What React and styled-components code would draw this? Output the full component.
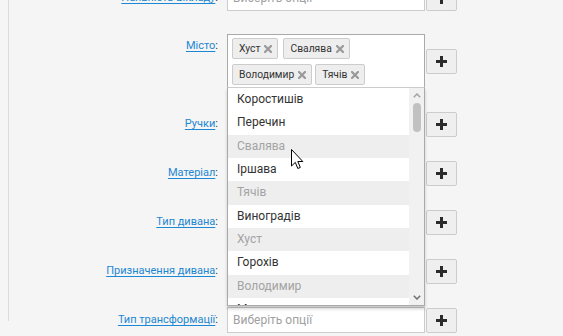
import React from "react";
import styled, { createGlobalStyle } from "styled-components";

const GlobalStyle = createGlobalStyle`
  html, body { margin: 0; padding: 0; }
  body {
    background: #f5f5f5;
    font-family: Roboto, "Noto Sans", Arial, sans-serif;
    overflow: hidden;
  }
`;

const Page = styled.div`
  position: relative;
  width: 563px;
  height: 336px;
  overflow: hidden;
  padding-left: 8px;
  box-sizing: border-box;
`;

const Panel = styled.div`
  height: 100%;
  border-left: 1px solid #dcdcdc;
`;

const Form = styled.div`
  display: flex;
  flex-direction: column;
  gap: 23px;
  margin-top: -15px;
`;

const Row = styled.div`
  display: flex;
  align-items: ${(p) => (p.$top ? "flex-start" : "center")};
`;

const Label = styled.div`
  width: 209px;
  margin-right: 9px;
  text-align: right;
  font-size: 11px;
  line-height: 14px;
  color: #333;
  padding-top: ${(p) => (p.$top ? "5px" : "0")};
  white-space: nowrap;
`;

const LabelLink = styled.a`
  color: #1c87d3;
  text-decoration: underline;
  text-underline-offset: 2px;
  cursor: pointer;
`;

const Field = styled.div`
  position: relative;
  width: 198px;
`;

const Input = styled.div`
  box-sizing: border-box;
  height: 26px;
  border: 1px solid #ccc;
  background: #fff;
  padding: 0 5px;
  font-size: 12px;
  line-height: 24px;
  color: #a0a0a0;
`;

const MultiBox = styled.div`
  box-sizing: border-box;
  border: 1px solid #aaa;
  background: #fff;
  padding: 3px 0 2px 4px;
  display: flex;
  flex-wrap: wrap;
  row-gap: 5px;
`;

const Tag = styled.span`
  box-sizing: border-box;
  height: 21px;
  display: inline-flex;
  align-items: center;
  gap: 4px;
  padding: 0 5px 0 6px;
  margin-right: ${(p) => p.$mr || 5}px;
  background: #eee;
  border: 1px solid #ccc;
  border-radius: 2px;
  font-size: 10.3px;
  color: #333;
`;

const TagX = styled.svg`
  width: 8px;
  height: 8px;
  display: block;
`;

const PlusButton = styled.button`
  box-sizing: border-box;
  width: 31px;
  height: 25px;
  margin-left: 1px;
  margin-top: ${(p) => (p.$top ? "15px" : "0")};
  background: #efefef;
  border: 1px solid #ccc;
  border-radius: 2px;
  padding: 0;
  display: flex;
  align-items: center;
  justify-content: center;
`;

const Dropdown = styled.div`
  position: absolute;
  left: 0;
  right: 0;
  top: calc(100% - 1px);
  height: 219px;
  box-sizing: border-box;
  border: 1px solid #aaa;
  border-top-color: #ccc;
  background: #fff;
  box-shadow: 0 3px 3px rgba(0, 0, 0, 0.18);
  display: flex;
  z-index: 5;
`;

const List = styled.div`
  flex: 1;
  overflow: hidden;
`;

const Option = styled.div`
  height: 23.33px;
  box-sizing: border-box;
  padding-left: 9px;
  font-size: 12px;
  line-height: 23.33px;
  color: ${(p) => (p.$taken ? "#a3a3a3" : "#333")};
  background: ${(p) => (p.$taken ? "#eeeeee" : "#fff")};
  white-space: nowrap;
`;

const Scrollbar = styled.div`
  width: 15px;
  background: #f1f1f1;
  display: flex;
  flex-direction: column;
`;

const ScrollArrow = styled.div`
  height: 15px;
  display: flex;
  align-items: center;
  justify-content: center;
`;

const Track = styled.div`
  flex: 1;
  display: flex;
  justify-content: center;
`;

const Thumb = styled.div`
  width: 8px;
  height: 29px;
  border-radius: 4px;
  background: #c1c1c1;
`;

const Cursor = styled.svg`
  position: absolute;
  left: 291px;
  top: 149px;
  z-index: 10;
`;

const Plus = () => (
  <svg width="11" height="11" viewBox="0 0 11 11">
    <rect x="4" y="0" width="3" height="11" fill="#2b2b2b" />
    <rect x="0" y="4" width="11" height="3" fill="#2b2b2b" />
  </svg>
);

const X = () => (
  <TagX viewBox="0 0 8 8">
    <path d="M1 1 L7 7 M7 1 L1 7" stroke="#999" strokeWidth="2.2" strokeLinecap="square" />
  </TagX>
);

const tags = [
  { name: "Хуст" },
  { name: "Свалява" },
  { name: "Володимир", mr: 3 },
  { name: "Тячів" },
];

const options = [
  { name: "Коростишів" },
  { name: "Перечин" },
  { name: "Свалява", taken: true },
  { name: "Іршава" },
  { name: "Тячів", taken: true },
  { name: "Виноградів" },
  { name: "Хуст", taken: true },
  { name: "Горохів" },
  { name: "Володимир", taken: true },
  { name: "Мукачево" },
];

const simpleRows = ["Ручки", "Матеріал", "Тип дивана", "Призначення дивана"];

export default function App() {
  return (
    <>
      <GlobalStyle />
      <Page>
        <Panel>
          <Form>
            <Row>
              <Label>
                <LabelLink>Наявність вікладу</LabelLink>:
              </Label>
              <Field>
                <Input>Виберіть опції</Input>
              </Field>
              <PlusButton>
                <Plus />
              </PlusButton>
            </Row>

            <Row $top>
              <Label $top>
                <LabelLink>Місто</LabelLink>:
              </Label>
              <Field>
                <MultiBox>
                  {tags.map((t) => (
                    <Tag key={t.name} $mr={t.mr}>
                      {t.name}
                      <X />
                    </Tag>
                  ))}
                </MultiBox>
                <Dropdown>
                  <List>
                    {options.map((o) => (
                      <Option key={o.name} $taken={o.taken}>
                        {o.name}
                      </Option>
                    ))}
                  </List>
                  <Scrollbar>
                    <ScrollArrow>
                      <svg width="8" height="5" viewBox="0 0 8 5">
                        <path d="M0.8 4.2 L4 1 L7.2 4.2" fill="none" stroke="#a3a3a3" strokeWidth="1.5" />
                      </svg>
                    </ScrollArrow>
                    <Track>
                      <Thumb />
                    </Track>
                    <ScrollArrow>
                      <svg width="8" height="5" viewBox="0 0 8 5">
                        <path d="M0.8 0.8 L4 4 L7.2 0.8" fill="none" stroke="#707070" strokeWidth="1.5" />
                      </svg>
                    </ScrollArrow>
                  </Scrollbar>
                </Dropdown>
              </Field>
              <PlusButton $top>
                <Plus />
              </PlusButton>
            </Row>

            {simpleRows.map((r) => (
              <Row key={r}>
                <Label>
                  <LabelLink>{r}</LabelLink>:
                </Label>
                <Field>
                  <Input>Виберіть опції</Input>
                </Field>
                <PlusButton>
                  <Plus />
                </PlusButton>
              </Row>
            ))}

            <Row>
              <Label>
                <LabelLink>Тип трансформації</LabelLink>:
              </Label>
              <Field>
                <Input>Виберіть опції</Input>
              </Field>
              <PlusButton>
                <Plus />
              </PlusButton>
            </Row>
          </Form>
        </Panel>
        <Cursor width="13" height="21" viewBox="0 0 13 21">
          <path
            d="M0.5 0.5 L0.5 17 L4.3 13.4 L6.8 19.5 L9.3 18.4 L6.8 12.5 L11.8 12.5 Z"
            fill="#fff"
            stroke="#000"
            strokeWidth="1"
            strokeLinejoin="miter"
          />
        </Cursor>
      </Page>
    </>
  );
}
